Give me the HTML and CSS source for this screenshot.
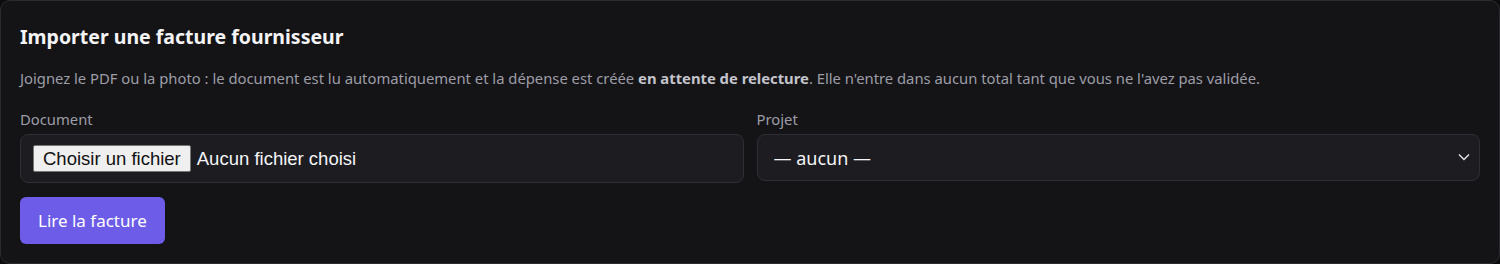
FILE: index.html
```html
<!DOCTYPE html>
<html lang="fr">
<head>
    <meta charset="UTF-8">
    <meta name="viewport" content="width=device-width, initial-scale=1.0">
    <title>Importer une facture fournisseur</title>
    <link rel="stylesheet" href="styles.css">
</head>
<body>

<div class="import-card">
    <h2>Importer une facture fournisseur</h2>
    <p class="hint">Joignez le PDF ou la photo : le document est lu automatiquement et la dépense est créée <strong>en attente de relecture</strong>. Elle n'entre dans aucun total tant que vous ne l'avez pas validée.</p>

    <div class="fields">
        <div class="field">
            <span class="field-label">Document</span>
            <label class="file-box">
                <input type="file" class="file-hidden" accept="application/pdf,image/*">
                <span class="file-btn">Choisir un fichier</span>
                <span class="file-name">Aucun fichier choisi</span>
            </label>
        </div>
        <div class="field">
            <span class="field-label">Projet</span>
            <div class="select-box">
                <select id="project">
                    <option value="">— aucun —</option>
                </select>
                <svg class="chevron" width="14" height="14" viewBox="0 0 14 14"><path d="M2 4.5l5 5 5-5" fill="none" stroke="#e5e5ea" stroke-width="1.4"/></svg>
            </div>
        </div>
    </div>

    <button class="read-btn">Lire la facture</button>
</div>

</body>
</html>
```

FILE: styles.css
```css
body {
    margin: 0;
    background-color: #0c0c0e;
    font-family: "Noto Sans", "Open Sans", sans-serif;
}
.import-card {
    box-sizing: border-box;
    height: 264px;
    background-color: #141417;
    border: 1px solid #2b2b30;
    border-radius: 10px;
    padding: 19px 19px;
}
h2 {
    margin: 4px 0 0;
    font-size: 19.5px;
    font-weight: 700;
    color: #f4f4f6;
    line-height: 26px;
}
.hint {
    margin: 18px 0 0;
    font-size: 14.8px;
    line-height: 21px;
    color: #9d9da6;
}
.hint strong {
    color: #c4c4cc;
}
.fields {
    display: grid;
    grid-template-columns: 1fr 1fr;
    gap: 13px;
    margin-top: 20px;
}
.field {
    display: flex;
    flex-direction: column;
}
.field-label {
    font-size: 14.8px;
    line-height: 20px;
    color: #9d9da6;
    margin-bottom: 5px;
}
.file-box {
    display: flex;
    align-items: center;
    height: 49px;
    box-sizing: border-box;
    padding: 0 12px;
    background-color: #1c1c21;
    border: 1px solid #2e2e34;
    border-radius: 8px;
    font-family: "Liberation Sans", Arial, sans-serif;
    font-size: 18.5px;
    color: #f4f4f6;
}
.file-hidden {
    display: none;
}
.file-btn {
    background-color: #efefef;
    color: #111111;
    border: 1px solid #767676;
    border-radius: 2px;
    padding: 2px 9px;
    margin-right: 6px;
    line-height: 21px;
}
.select-box {
    position: relative;
}
.select-box select {
    width: 100%;
    height: 47px;
    box-sizing: border-box;
    appearance: none;
    background-color: #1c1c21;
    border: 1px solid #2e2e34;
    border-radius: 8px;
    color: #f4f4f6;
    font-family: "Noto Sans", "Open Sans", sans-serif;
    font-size: 18px;
    padding: 0 16px;
}
.chevron {
    position: absolute;
    right: 9px;
    top: 16px;
    pointer-events: none;
}
.read-btn {
    margin-top: 14px;
    padding: 0 18px;
    height: 47px;
    background-color: #6c5ce7;
    color: #ffffff;
    border: none;
    border-radius: 6px;
    font-family: "Noto Sans", "Open Sans", sans-serif;
    font-size: 17px;
    cursor: pointer;
}
.read-btn:hover {
    background-color: #7b6cf0;
}
```
